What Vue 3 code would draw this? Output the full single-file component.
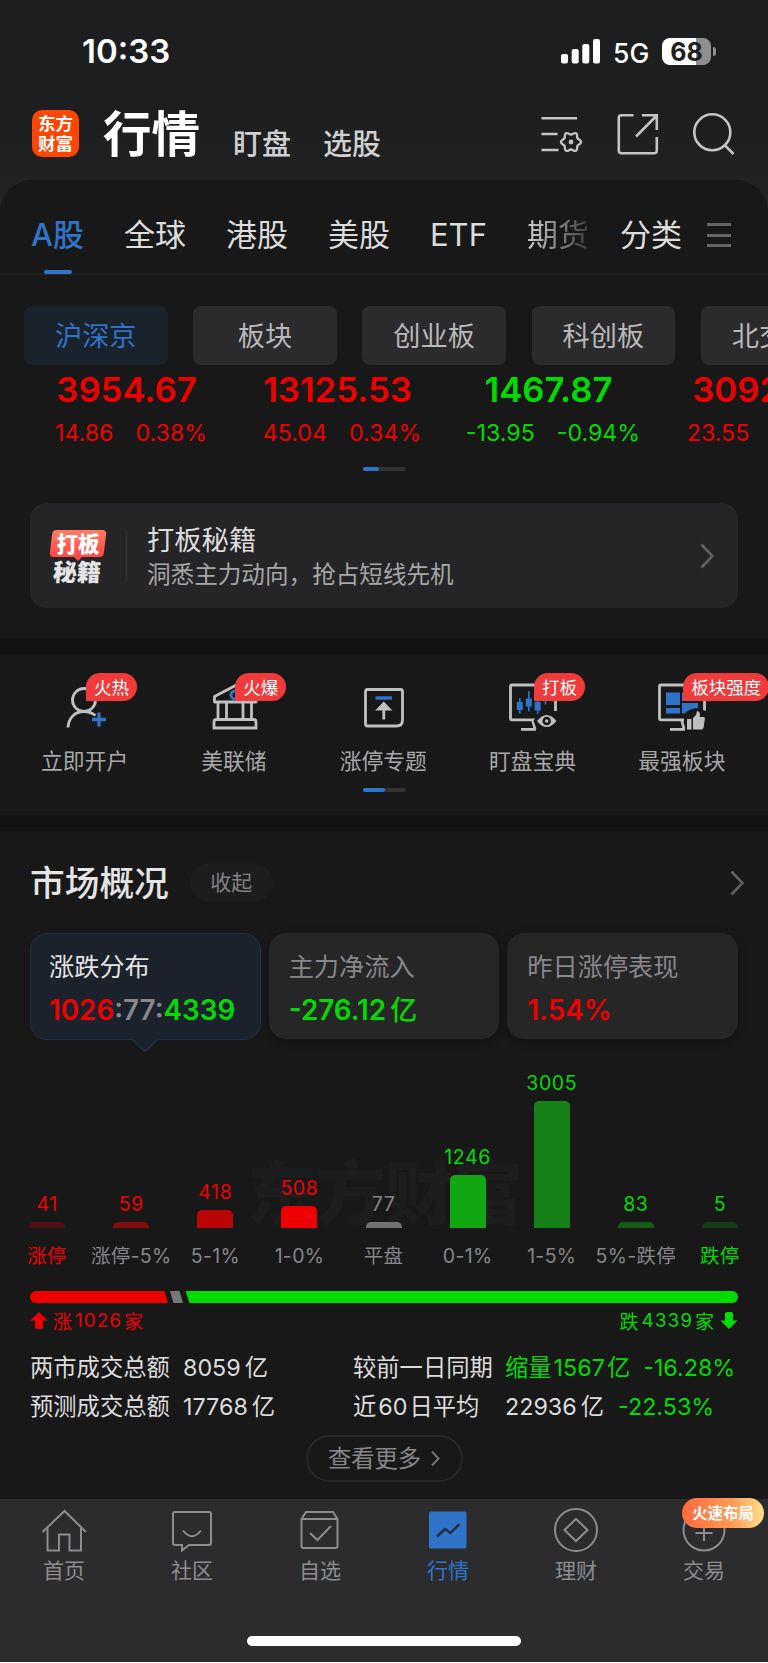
<template>
  <div class="page">
    <div class="status">
      <span class="time">10:33</span>
      <svg class="signal" width="39" height="25" viewBox="0 0 39 25" fill="#fff">
        <rect x="0" y="15" width="7" height="9.5" rx="2" />
        <rect x="10.7" y="10" width="7" height="14.5" rx="2" />
        <rect x="21.3" y="5" width="7" height="19.5" rx="2" />
        <rect x="32" y="0" width="7" height="24.5" rx="2" />
      </svg>
      <span class="net">5G</span>
      <span class="battery">68</span>
      <i class="battery-cap"></i>
    </div>

    <header class="header">
      <div class="logo"><span>东方</span><span>财富</span></div>
      <h1>行情</h1>
      <span class="sub">盯盘</span>
      <span class="sub">选股</span>
      <div class="tools">
        <svg width="42" height="42" viewBox="0 0 42 42" fill="none" stroke="#c4c4c4" stroke-width="2.6">
          <path d="M.5 5.3H36M.5 21H16.5M.5 37H17.5" />
          <path
            transform="translate(30 29) scale(.9)"
            d="M9.37 2.51Q6.41 3.7 6.86 6.86 6.5 11.26 2.51 9.37 0 7.4-2.51 9.37-6.5 11.26-6.86 6.86-6.41 3.7-9.37 2.51-13 0-9.37-2.51-6.41-3.7-6.86-6.86-6.5-11.26-2.51-9.37 0-7.4 2.51-9.37 6.5-11.26 6.86-6.86 6.41-3.7 9.37-2.51 13 0 9.37 2.51z"
          />
          <circle cx="30" cy="29" r="2.4" fill="#c4c4c4" stroke="none" />
        </svg>
        <svg width="42" height="42" viewBox="0 0 42 42" fill="none" stroke="#c4c4c4" stroke-width="2.6">
          <path d="M16.5 2.3H4.3a2.5 2.5 0 0 0-2.5 2.5v33a2.5 2.5 0 0 0 2.5 2.5h33a2.5 2.5 0 0 0 2.5-2.5V24" />
          <path d="M25 2.3H39.8V17M39.3 3 19 23.5" />
        </svg>
        <svg width="42" height="42" viewBox="0 0 42 42" fill="none" stroke="#c4c4c4" stroke-width="2.6">
          <circle cx="19.3" cy="19.3" r="18" />
          <path d="M31.5 31.8 40.5 41" />
        </svg>
      </div>
    </header>

    <main class="panel">
      <nav class="tabs">
        <span v-for="t in tabs" :key="t" class="tab" :class="{ on: t === 'A股', fade: t === '期货' }">{{ t }}</span>
        <span class="tab last">分类</span>
        <i class="menu"></i>
      </nav>

      <div class="chips">
        <span v-for="(c, i) in chips" :key="c" class="chip" :class="{ on: i === 0 }">{{ c }}</span>
      </div>

      <div class="indices">
        <div v-for="x in indices" :key="x.value" class="index" :class="x.dir">
          <b>{{ x.value }}</b>
          <p><span>{{ x.diff }}</span><span>{{ x.pct }}</span></p>
        </div>
      </div>
      <div class="pager"><i></i></div>

      <div class="promo">
        <div class="promo-logo"><span class="tagline">打板</span><span class="word">秘籍</span></div>
        <div class="promo-text">
          <strong>打板秘籍</strong>
          <span>洞悉主力动向，抢占短线先机</span>
        </div>
        <svg width="14" height="26" viewBox="0 0 14 26" fill="none" stroke="#606062" stroke-width="2.6">
          <path d="M1.5 1.5 12.5 13 1.5 24.5" />
        </svg>
      </div>

      <div class="band"></div>

      <section class="quick">
        <div class="quick-row">
          <div v-for="q in quick" :key="q.name" class="quick-item">
            <svg width="52" height="52" viewBox="0 0 52 52" fill="none" stroke="#c0c0c0" stroke-width="2.8">
              <template v-if="q.icon === 'user'">
                <circle cx="25" cy="19" r="11.5" />
                <path d="M9 46.500C9.500 37.500 15.500 30.500 25 30.500c4.500 0 8 1.300 11.500 4" />
                <path d="M40 31.500v14M33 38.500h14" stroke="#2f74c8" stroke-width="3.400" />
              </template>
              <template v-else-if="q.icon === 'bank'">
                <path d="M6.500 21v-5.500L27.500 4.500l20.500 11V21z" stroke-linejoin="round" />
                <path d="M10 21v17M18.500 21v17M35 21v17M43.500 21v17" />
                <path d="M6 47v-6q0-2.500 2.500-2.500h37q2.500 0 2.500 2.500v6z" />
                <circle cx="27" cy="14" r="4" stroke="#2f74c8" stroke-width="3" />
              </template>
              <template v-else-if="q.icon === 'limit'">
                <path d="M10.500 8.500h33q2 0 2 2V39q0 6-6 6h-29q-2 0-2-2V10.500q0-2 2-2z" />
                <path d="M18.500 17h16.500" stroke="#2f74c8" stroke-width="3.400" />
                <path d="M26.800 38.500V25M21.500 28 26.800 22.500l5.300 5.500z" fill="#c0c0c0" />
              </template>
              <template v-else>
                <path d="M28 38.800H5q-1.500 0-1.500-1.500V5.500Q3.500 4 5 4h42q1.500 0 1.500 1.500V30" />
                <path d="M14 48.300H29M25.500 38.500 28 48" />
                <template v-if="q.icon === 'candles'">
                  <path d="M12.800 17v15.500M21.800 10v20.500M30.700 15v18.500M38.500 13v10.500" stroke="#2f74c8" stroke-width="1.600" />
                  <path d="M9.800 21h6v8h-6zM18.800 17.500h6v8h-6zM27.700 21h6v8.500h-6z" fill="#2f74c8" stroke="none" />
                  <path d="M26.500 40 31 33 40 29.500l8 2 4 3V48H30z" fill="#181818" stroke="none" />
                  <path d="M30 40Q39.500 28 49.500 40 39.500 52 30 40z" fill="#c0c0c0" stroke="none" />
                  <circle cx="39.700" cy="40" r="3" stroke="#181818" stroke-width="2.500" />
                </template>
                <template v-else>
                  <path
                    d="M10 11.500h14V24H10zM10 27h14v5.500H10zM26 22h16v5q-9 .5-13.500 5.500H26zM26 11.500h16V20H26z"
                    fill="#2f74c8"
                    stroke="none"
                  />
                  <path d="M28 36 33 30 42 28l9 2v20H31z" fill="#181818" stroke="none" />
                  <path
                    d="M31 38h4.500v10.500H31zM37 37l3-3 1-4q3.800.5 2.800 6H48q1.300.5.800 2.500L47.500 47l-1.500 1.500h-9z"
                    fill="#c0c0c0"
                    stroke="none"
                  />
                </template>
              </template>
            </svg>
            <em v-if="q.tag">{{ q.tag }}</em>
            <span>{{ q.name }}</span>
          </div>
        </div>
        <div class="pager wide"><i></i></div>
      </section>

      <div class="band"></div>

      <section class="market">
        <div class="market-head">
          <h2>市场概况</h2>
          <span class="fold">收起</span>
          <svg width="14" height="26" viewBox="0 0 14 26" fill="none" stroke="#606062" stroke-width="2.6">
            <path d="M1.5 1.5 12.5 13 1.5 24.5" />
          </svg>
        </div>

        <div class="cards">
          <div class="card on">
            <span>涨跌分布</span>
            <b><i class="up">1026</i>:77:<i class="down">4339</i></b>
            <svg class="tip" width="28" height="14" viewBox="0 0 28 14">
              <path d="M0 0h28v1.500h-1.500L16 12q-2 1.600-4 0L1.500 1.500H0z" fill="#1b222b" />
              <path d="M.5 1.500h1L12 12q2 1.600 4 0L26.500 1.500h1" fill="none" stroke="#1e3048" stroke-width="1.500" />
            </svg>
          </div>
          <div class="card">
            <span>主力净流入</span>
            <b class="down">-276.12<small>亿</small></b>
          </div>
          <div class="card">
            <span>昨日涨停表现</span>
            <b class="up">1.54%</b>
          </div>
        </div>

        <div class="chart">
          <div class="watermark">东方财富</div>
          <div v-for="b in bars" :key="b.label" class="col" :class="b.dir">
            <span class="num">{{ b.count }}</span>
            <i class="bar" :style="{ height: b.h + 'px', background: b.color }"></i>
            <span class="cat" :class="{ edge: b.edge }">{{ b.label }}</span>
          </div>
        </div>

        <svg class="ratio" width="708" height="12" viewBox="0 0 708 12">
          <path d="M6 0H134.500L138 12H6A6 6 0 0 1 6 0z" fill="#ef0000" />
          <path d="M140 0h9.500l3.500 12h-9.500z" fill="#777" />
          <path d="M155.500 0H702a6 6 0 0 1 0 12H159.500z" fill="#00dc00" />
        </svg>

        <div class="counts">
          <span class="up">
            <svg width="18" height="17" viewBox="0 0 18 17"><path d="M9 0 17.500 8.500H13V15q0 2-2 2H7q-2 0-2-2V8.500H.5z" fill="#ef0000" /></svg>
            涨<u>1026</u>家
          </span>
          <span class="down">
            跌<u>4339</u>家
            <svg width="18" height="17" viewBox="0 0 18 17"><path d="M9 17 .5 8.500H5V2q0-2 2-2h4q2 0 2 2v6.500h4.500z" fill="#00dc00" /></svg>
          </span>
        </div>

        <div class="stats">
          <span>两市成交总额</span>
          <span>8059<u>亿</u></span>
          <span>较前一日同期</span>
          <span class="down tight">缩量<u>1567</u><u>亿</u><s>-16.28%</s></span>
          <span>预测成交总额</span>
          <span>17768<u>亿</u></span>
          <span class="tight">近<u>60</u><u>日平均</u></span>
          <span>22936<u>亿</u><s class="down">-22.53%</s></span>
        </div>

        <div class="more">
          查看更多
          <svg width="9" height="17" viewBox="0 0 9 17" fill="none" stroke="#77777a" stroke-width="2">
            <path d="M1 1.5 7.5 8.5 1 15.5" />
          </svg>
        </div>
      </section>
    </main>

    <footer class="tabbar">
      <div v-for="n in navs" :key="n.name" class="nav" :class="{ on: n.icon === 'quote' }">
        <svg width="46" height="46" viewBox="0 0 46 46" fill="none" stroke="#8c8c91" stroke-width="2">
          <template v-if="n.icon === 'home'">
            <path d="M1.5 25 23.5 4 45 25" />
            <path d="M6.5 21v22.500h11.500v-16h10.500v16H40V21" />
          </template>
          <template v-else-if="n.icon === 'chat'">
            <path d="M6 5h34q2 0 2 2v29q0 2-2 2H20l-7 5.500V38H6q-2 0-2-2V7q0-2 2-2z" />
            <path d="M14 23.500q9 11.500 18 0" />
          </template>
          <template v-else-if="n.icon === 'box'">
            <path d="M4.500 12v27q0 2 2 2h32q2 0 2-2V12l-4.500-7H9zM4.500 12h36" />
            <path d="m13 26 7.500 7L34 19" />
          </template>
          <template v-else-if="n.icon === 'quote'">
            <rect x="4" y="4.500" width="37.500" height="37" rx="2" fill="#2f74c8" stroke="none" />
            <path d="M12 29.500 20 22l5.500 4L34.500 17" stroke="#222b38" stroke-width="2.400" />
          </template>
          <template v-else-if="n.icon === 'gem'">
            <circle cx="23" cy="23" r="21" />
            <path d="m23 12 11.500 11L23 34 11.500 23z" />
          </template>
          <template v-else>
            <circle cx="23" cy="23" r="20.500" />
            <path d="M23 12v22M14.500 26h17" />
          </template>
        </svg>
        <em v-if="n.tag">{{ n.tag }}</em>
        <span>{{ n.name }}</span>
      </div>
      <i class="home-line"></i>
    </footer>
  </div>
</template>

<script setup>
const tabs = ['A股', '全球', '港股', '美股', 'ETF', '期货'];
const chips = ['沪深京', '板块', '创业板', '科创板', '北交所'];

const indices = [
  { value: '3954.67', diff: '14.86', pct: '0.38%', dir: 'up' },
  { value: '13125.53', diff: '45.04', pct: '0.34%', dir: 'up' },
  { value: '1467.87', diff: '-13.95', pct: '-0.94%', dir: 'down' },
  { value: '3092.14', diff: '23.55', pct: '0.77%', dir: 'up' },
];

const quick = [
  { name: '立即开户', icon: 'user', tag: '火热' },
  { name: '美联储', icon: 'bank', tag: '火爆' },
  { name: '涨停专题', icon: 'limit' },
  { name: '盯盘宝典', icon: 'candles', tag: '打板' },
  { name: '最强板块', icon: 'blocks', tag: '板块强度' },
];

const bars = [
  { label: '涨停', count: 41, h: 6, color: '#501012', dir: 'up', edge: true },
  { label: '涨停-5%', count: 59, h: 6, color: '#820b0d', dir: 'up' },
  { label: '5-1%', count: 418, h: 18, color: '#b90506', dir: 'up' },
  { label: '1-0%', count: 508, h: 22, color: '#ef0000', dir: 'up' },
  { label: '平盘', count: 77, h: 6, color: '#737373', dir: 'flat' },
  { label: '0-1%', count: 1246, h: 53, color: '#13a613', dir: 'down' },
  { label: '1-5%', count: 3005, h: 127, color: '#158015', dir: 'down' },
  { label: '5%-跌停', count: 83, h: 6, color: '#165c16', dir: 'down' },
  { label: '跌停', count: 5, h: 6, color: '#173a17', dir: 'down', edge: true },
];

const navs = [
  { name: '首页', icon: 'home' },
  { name: '社区', icon: 'chat' },
  { name: '自选', icon: 'box' },
  { name: '行情', icon: 'quote' },
  { name: '理财', icon: 'gem' },
  { name: '交易', icon: 'trade', tag: '火速布局' },
];
</script>

<style>
body {
  background: #fff;
}
</style>

<style scoped>
* {
  box-sizing: border-box;
  margin: 0;
}
i,
em {
  font-style: normal;
}
u,
s {
  text-decoration: none;
}
svg {
  display: block;
  flex: none;
}
.page {
  width: 768px;
  height: 1662px;
  overflow: hidden;
  background: linear-gradient(#1d1e20 0, #1d1e20 110px, #242424 230px);
  font-family: Inter, 'Noto Sans CJK SC', sans-serif;
  color: #dcdcdc;
  white-space: nowrap;
}
.up {
  color: #ef0000;
}
.down {
  color: #00dc00;
}

.status {
  height: 102px;
  padding: 0 52px 0 82px;
  display: flex;
  align-items: center;
  color: #fff;
}
.time {
  font-size: 33px;
  font-weight: 600;
}
.signal {
  margin-left: auto;
}
.net {
  margin: 3px 0 0 13px;
  width: 49px;
  font-size: 26.5px;
  font-weight: 500;
}
.battery {
  width: 49px;
  height: 27px;
  border-radius: 8px;
  background: linear-gradient(90deg, #fff 34px, #8f8f90 34px);
  color: #1d1e20;
  font-size: 25px;
  font-weight: 700;
  line-height: 28px;
  text-align: center;
}
.battery-cap {
  width: 3px;
  height: 9px;
  margin: 0 0 0 2px;
  border-radius: 0 4px 4px 0;
  background: #8f8f90;
}

.header {
  height: 63px;
  padding: 0 33px 0 32px;
  display: flex;
  align-items: center;
}
.logo {
  width: 47px;
  height: 47px;
  padding-top: 4px;
  border-radius: 10px;
  background: #ff4500;
  color: #fff;
  font-size: 17.5px;
  font-weight: 700;
  line-height: 19.5px;
  text-align: center;
}
.logo span {
  display: block;
}
h1 {
  margin: 0 4px 0 24px;
  padding-top: 2px;
  font-size: 48.5px;
  font-weight: 700;
  line-height: 60px;
  color: #fff;
}
.sub {
  margin-left: 29px;
  padding-top: 22px;
  font-size: 29px;
  font-weight: 500;
  line-height: 29px;
  color: #d0d0d0;
}
.sub + .sub {
  margin-left: 32px;
}
.tools {
  margin-left: auto;
  display: flex;
  gap: 34px;
}

.panel {
  height: 1319px;
  margin-top: 15px;
  border-radius: 32px 32px 0 0;
  background: #181818;
}
.tabs {
  height: 95px;
  padding: 0 35px 0 31px;
  display: flex;
  gap: 40px;
  border-bottom: 1px solid #272727;
  font-size: 31px;
}
.tab {
  height: 95px;
  line-height: 110px;
}
.tab.on {
  position: relative;
  color: #2f74c8;
  font-weight: 500;
}
.tab.on::after {
  content: '';
  position: absolute;
  left: 13px;
  bottom: 1px;
  width: 28px;
  height: 4px;
  border-radius: 2px;
  background: #2f74c8;
}
.tab.fade {
  color: transparent;
  background: linear-gradient(90deg, #d0d0d0, #3a3a3a);
  background-clip: text;
}
.tab.last {
  margin-left: -9px;
}
.menu {
  flex: none;
  width: 24px;
  height: 24px;
  margin: 43px 0 0 auto;
  border-top: 3px solid #666;
  border-bottom: 3px solid #666;
  background: linear-gradient(#666, #666) center / 24px 3px no-repeat;
}
.tab.last + .menu {
  margin-left: -15px;
}

.chips {
  padding: 31px 0 0 24px;
  display: flex;
  gap: 25.7px;
  overflow: hidden;
}
.chip {
  flex: none;
  width: 143.5px;
  height: 59px;
  border-radius: 8px;
  background: #2b2b2d;
  color: #b8b8b8;
  font-size: 27.2px;
  line-height: 62px;
  text-align: center;
}
.chip.on {
  background: #1a222b;
  color: #2f74c8;
}

.indices {
  height: 72px;
  margin-top: 12px;
  padding-left: 21px;
  display: flex;
  overflow: hidden;
}
.index {
  flex: none;
  width: 211px;
  text-align: center;
}
.index b {
  display: block;
  font-size: 34.7px;
  font-weight: 600;
  line-height: 24px;
}
.index p {
  margin: 20px -9px 0 0;
  display: flex;
  justify-content: center;
  gap: 22px;
  font-size: 23.2px;
  line-height: 24px;
}
.pager {
  width: 43px;
  height: 4px;
  margin: 18px auto 0;
  border-radius: 2px;
  background: #333;
}
.pager i {
  display: block;
  width: 16px;
  height: 4px;
  border-radius: 2px;
  background: #2f74c8;
}
.pager.wide i {
  width: 22px;
}

.promo {
  height: 105px;
  margin: 32px 30px 30px;
  padding: 0 24px 0 20px;
  display: flex;
  align-items: center;
  border-radius: 16px;
  background: #252527;
}
.promo > svg {
  margin-left: auto;
}
.promo-logo {
  width: 77px;
  height: 52px;
  border-right: 1.5px solid #38383a;
}
.tagline {
  position: relative;
  display: block;
  width: 56px;
  height: 27px;
  color: #fff;
  font-size: 21.5px;
  font-weight: 900;
  line-height: 28px;
  text-align: center;
  z-index: 0;
}
.tagline::before {
  content: '';
  position: absolute;
  inset: 0 1px;
  border-radius: 4px;
  background: linear-gradient(#ff7c60, #ff4747);
  transform: skewX(-7deg);
  z-index: -1;
}
.tagline::after {
  content: '';
  position: absolute;
  left: 24px;
  top: 27px;
  border: 4px solid transparent;
  border-top-color: #ff4747;
  border-bottom: 0;
}
.word {
  display: block;
  width: 54px;
  font-size: 24px;
  font-weight: 900;
  line-height: 31px;
  text-align: center;
  color: #e4e4e4;
  transform: skewX(-3deg);
}
.promo-text {
  padding: 3px 0 0 20px;
}
.promo-text strong,
.promo-text span {
  display: block;
}
.promo-text strong {
  font-size: 27.3px;
  font-weight: 400;
  line-height: 36px;
}
.promo-text span {
  font-size: 23.6px;
  line-height: 32px;
  color: #a6a6a6;
}

.band {
  height: 16px;
  background: #121212;
}
.quick {
  height: 161px;
}
.quick-row {
  height: 134px;
  padding-left: 10px;
  display: flex;
}
.quick-item {
  position: relative;
  flex: none;
  width: 149.3px;
  padding-top: 27px;
  text-align: center;
}
.quick-item svg {
  margin: 0 auto;
}
.quick-item span {
  display: block;
  margin-top: 13px;
  font-size: 21.8px;
  line-height: 30px;
  color: #a8a8a8;
}
.quick-item em {
  position: absolute;
  left: 76px;
  top: 19px;
  height: 28px;
  padding: 0 8px;
  border-radius: 14px 14px 14px 0;
  background: #ef3b3b;
  color: #fff;
  font-size: 17.5px;
  line-height: 29px;
}
.pager.wide {
  margin-top: 0;
}

.market {
  padding: 32px 30px 0;
}
.market-head {
  height: 39px;
  margin-right: -6px;
  display: flex;
  align-items: center;
}
.market-head svg {
  margin-left: auto;
}
h2 {
  padding-top: 2px;
  font-size: 34.7px;
  font-weight: 500;
  line-height: 39px;
  color: #e4e4e4;
}
.fold {
  width: 83px;
  height: 39px;
  margin-left: 21px;
  border-radius: 20px;
  background: #1d1d1d;
  color: #808085;
  font-size: 21px;
  line-height: 39px;
  text-align: center;
}

.cards {
  margin-top: 31px;
  display: grid;
  grid-template-columns: repeat(3, 1fr);
  gap: 8px;
}
.card {
  position: relative;
  height: 106px;
  padding: 19px 0 0 20px;
  border-radius: 17px;
  background: #262626;
  box-shadow: 0 2px 8px rgba(0, 0, 0, 0.25);
  color: #86868b;
}
.card.on {
  height: 107px;
  padding: 18px 0 0 18px;
  border: 1.5px solid #1e3048;
  background: #1b222b;
  box-shadow: none;
}
.card span {
  display: block;
  font-size: 25.2px;
  line-height: 30px;
}
.card.on span {
  color: #e2e2e2;
}
.card b {
  display: block;
  margin-top: 13px;
  font-size: 27.8px;
  font-weight: 600;
  line-height: 30px;
}
.card small {
  margin-left: 4px;
  font-size: 27px;
  font-weight: 500;
}
.tip {
  position: absolute;
  left: 100px;
  top: 104px;
}

.chart {
  position: relative;
  height: 229px;
  margin: 1px -25px 0 -26px;
  display: flex;
  align-items: flex-end;
  justify-content: center;
}
.watermark {
  position: absolute;
  left: 243px;
  top: 103px;
  font-family: 'Noto Sans CJK SC', sans-serif;
  font-size: 69px;
  font-weight: 900;
  line-height: 90px;
  color: #1d1d1d;
}
.col {
  position: relative;
  flex: none;
  width: 84.1px;
  display: flex;
  flex-direction: column;
  align-items: center;
}
.num {
  font-size: 19.5px;
  line-height: 24px;
  letter-spacing: 0.6px;
}
.bar {
  width: 36px;
  margin-top: 6px;
  border-radius: 5px 5px 0 0;
}
.cat {
  margin: 15px 0 0;
  font-size: 19.5px;
  line-height: 27px;
  letter-spacing: 0.3px;
  color: #86868b;
}
.cat.edge {
  color: inherit;
}
.flat {
  color: #86868b;
}

.ratio {
  margin-top: 21px;
}
.counts {
  height: 36px;
  padding-bottom: 1px;
  display: flex;
  align-items: center;
  justify-content: space-between;
  font-size: 19px;
}
.counts span {
  display: flex;
  align-items: center;
}
.counts u {
  margin: 0 2px 0 3px;
  letter-spacing: 1px;
}
.counts .up svg {
  margin-right: 5px;
}
.counts .down svg {
  margin-left: 6px;
}
.stats {
  margin-top: 9px;
  display: grid;
  grid-template-columns: 153px 170px 152px auto;
  font-size: 23.3px;
  line-height: 39px;
}
.stats u {
  margin-left: 4px;
}
.stats .tight u {
  margin-left: 2px;
}
.stats s {
  margin-left: 14px;
}
.stats .tight s {
  margin-left: 13px;
}
.more {
  width: 157px;
  height: 47px;
  margin: 9px auto 0;
  display: flex;
  align-items: center;
  justify-content: center;
  gap: 10px;
  border: 2px solid #282828;
  border-radius: 24px;
  font-size: 23.3px;
  line-height: 41px;
  color: #86868b;
}

.tabbar {
  position: relative;
  height: 163px;
  padding-top: 8px;
  display: flex;
  background: #2c2c2e;
}
.nav {
  position: relative;
  flex: 1;
  font-size: 21px;
  line-height: 30px;
  text-align: center;
  color: #8c8c91;
}
.nav.on {
  color: #2f74c8;
}
.nav svg {
  margin: 0 auto;
}
.nav span {
  display: block;
  margin-top: 3px;
}
.nav em {
  position: absolute;
  left: 42px;
  top: -9px;
  width: 82px;
  height: 30px;
  border-radius: 15px;
  background: linear-gradient(90deg, #ff6a3c, #ff9a55 60%, #ffe08c);
  color: #fff;
  font-size: 15.5px;
  font-weight: 700;
  line-height: 31px;
}
.home-line {
  position: absolute;
  left: 247px;
  bottom: 16px;
  width: 274px;
  height: 10px;
  border-radius: 5px;
  background: #fff;
}
</style>
